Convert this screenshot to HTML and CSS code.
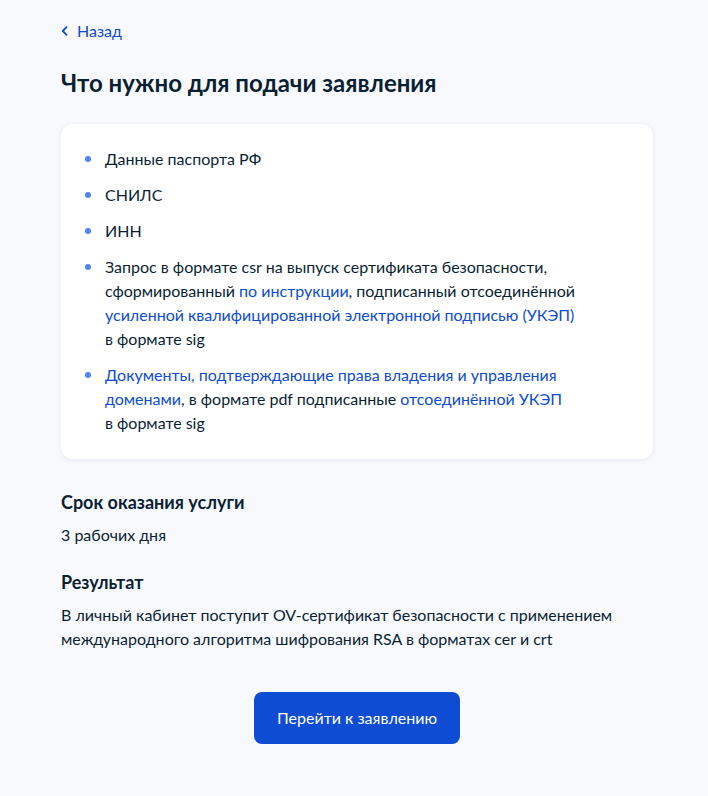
FILE: index.html
```html
<!DOCTYPE html>
<html lang="ru">
<head>
<meta charset="utf-8">
<link rel="stylesheet" href="styles.css">
</head>
<body>
<main class="page">
  <a class="back" href="#">
    <svg class="back-icon" width="8" height="10" viewBox="0 0 8 10"><path d="M5.5 1.2 L1.8 5 L5.5 8.8" fill="none" stroke="#0d4cd3" stroke-width="1.8" stroke-linecap="round" stroke-linejoin="round"/></svg>
    <span>Назад</span>
  </a>
  <h1 class="title">Что нужно для подачи заявления</h1>
  <section class="card">
    <ul class="list">
      <li>Данные паспорта РФ</li>
      <li>СНИЛС</li>
      <li>ИНН</li>
      <li>Запрос в формате csr на выпуск сертификата безопасности, сформированный <a href="#">по инструкции</a>, подписанный отсоединённой <a href="#">усиленной квалифицированной электронной подписью (УКЭП)</a><br>в формате sig</li>
      <li><a href="#">Документы, подтверждающие права владения и управления доменами</a>, в формате pdf подписанные <a href="#">отсоединённой УКЭП</a><br>в формате sig</li>
    </ul>
  </section>
  <h2 class="subtitle">Срок оказания услуги</h2>
  <p class="text">3 рабочих дня</p>
  <h2 class="subtitle second">Результат</h2>
  <p class="text">В личный кабинет поступит OV-сертификат безопасности с применением международного алгоритма шифрования RSA в форматах cer и crt</p>
  <div class="actions">
    <button class="btn" type="button">Перейти к заявлению</button>
  </div>
</main>
</body>
</html>
```
FILE: styles.css
```css
html, body {
  margin: 0;
  padding: 0;
  background: #f8f9fd;
}
body {
  font-family: Lato, "Noto Sans", sans-serif;
  color: #0b1f33;
  font-size: 16px;
  line-height: 24px;
}
.page {
  width: 592px;
  margin-left: 61px;
  padding-top: 18px;
}
.back {
  display: inline-flex;
  align-items: center;
  gap: 8px;
  color: #0d4cd3;
  text-decoration: none;
  font-size: 16px;
  line-height: 24px;
}
.back-icon {
  display: block;
}
.title {
  margin: 24px 0 0;
  font-size: 24px;
  line-height: 32px;
  font-weight: 700;
}
.card {
  margin-top: 25px;
  background: #fff;
  border-radius: 12px;
  box-shadow: 0 1px 4px rgba(225, 230, 240, 0.9);
  padding: 23px 24px 24px;
}
.list {
  list-style: none;
  margin: 0;
  padding: 0;
  display: flex;
  flex-direction: column;
  gap: 12px;
}
.list li {
  position: relative;
  padding-left: 20px;
}
.list li::before {
  content: "";
  position: absolute;
  left: 0;
  top: 9px;
  width: 6px;
  height: 6px;
  border-radius: 50%;
  background: #4f85f3;
}
.list a {
  color: #0d4cd3;
  text-decoration: none;
}
.subtitle {
  margin: 31px 0 0;
  font-size: 18px;
  line-height: 24px;
  font-weight: 700;
}
.subtitle.second {
  margin-top: 23px;
}
.text {
  margin: 9px 0 0;
}
.actions {
  display: flex;
  justify-content: center;
  margin-top: 41px;
}
.btn {
  background: #0d4cd3;
  color: #fff;
  border: none;
  border-radius: 8px;
  height: 52px;
  padding: 0 23px;
  font-family: Lato, "Noto Sans", sans-serif;
  font-size: 16px;
  line-height: 24px;
}
```
